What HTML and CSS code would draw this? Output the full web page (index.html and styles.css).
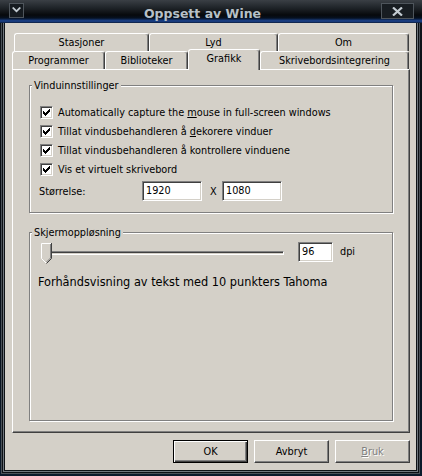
FILE: index.html
```html
<!DOCTYPE html>
<html lang="no">
<head>
  <meta charset="UTF-8" />
  <title>Oppsett av Wine</title>
  <link rel="stylesheet" href="styles.css">
</head>
<body>

<div class="window">
  <div class="titlebar">
    <span class="menu-btn">
      <svg width="9" height="7" viewBox="0 0 9 7"><path d="M0 1 L1.5 0 L4.5 3 L7.5 0 L9 1 L4.5 5.5 Z" fill="#c4ccd2"/></svg>
    </span>
    <span class="title">Oppsett av Wine</span>
    <span class="close-btn">
      <svg width="11" height="9" viewBox="0 0 11 9"><path d="M1 0.5 L10 8.5 M10 0.5 L1 8.5" stroke="#c4ccd2" stroke-width="2.2"/></svg>
    </span>
  </div>

  <div class="client">
    <div class="tabs">
      <div class="tab-row row1">
        <div class="tab t-stasjoner">Stasjoner</div>
        <div class="tab t-lyd">Lyd</div>
        <div class="tab t-om">Om</div>
      </div>
      <div class="tab-row row2">
        <div class="tab t-programmer">Programmer</div>
        <div class="tab t-biblioteker">Biblioteker</div>
        <div class="tab t-grafikk active">Grafikk</div>
        <div class="tab t-skrivebord">Skrivebordsintegrering</div>
      </div>

      <div class="panel">
        <div class="group g-vindu">
          <div class="group-title">Vinduinnstillinger</div>
          <div class="check first"><span class="box"><svg width="9" height="9" viewBox="0 0 9 9"><path d="M1 3H2V4H3V5H4V4H5V3H6V2H7V1H8V4H7V5H6V6H5V7H4V8H3V7H2V6H1Z"/></svg></span><span>Automatically capture the <u>m</u>ouse in full-screen windows</span></div>
          <div class="check"><span class="box"><svg width="9" height="9" viewBox="0 0 9 9"><path d="M1 3H2V4H3V5H4V4H5V3H6V2H7V1H8V4H7V5H6V6H5V7H4V8H3V7H2V6H1Z"/></svg></span><span>Tillat vindusbehandleren å <u>d</u>ekorere vinduer</span></div>
          <div class="check"><span class="box"><svg width="9" height="9" viewBox="0 0 9 9"><path d="M1 3H2V4H3V5H4V4H5V3H6V2H7V1H8V4H7V5H6V6H5V7H4V8H3V7H2V6H1Z"/></svg></span><span>Tillat vindusbehandleren å kontrollere vinduene</span></div>
          <div class="check"><span class="box"><svg width="9" height="9" viewBox="0 0 9 9"><path d="M1 3H2V4H3V5H4V4H5V3H6V2H7V1H8V4H7V5H6V6H5V7H4V8H3V7H2V6H1Z"/></svg></span><span>Vis et virtuelt skrivebord</span></div>
          <div class="size-row">
            <span class="size-label">Størrelse:</span>
            <span class="edit e-size">1920</span>
            <span class="x">X</span>
            <span class="edit e-size">1080</span>
          </div>
        </div>

        <div class="group g-dpi">
          <div class="group-title">Skjermoppløsning</div>
          <div class="dpi-row">
            <div class="slider">
              <div class="track"></div>
              <svg class="thumb" width="11" height="22" viewBox="0 0 11 22">
                <path d="M0.5 0.5H10.5V15.5L5.5 20.5L0.5 15.5Z" fill="#d4d0c8"/>
                <polyline points="0.5,15.5 0.5,0.5 10,0.5" fill="none" stroke="#fff"/>
                <polyline points="0.5,15.5 5,20" fill="none" stroke="#fff"/>
                <polyline points="10.5,0 10.5,15.5 5.5,20.5" fill="none" stroke="#404040"/>
                <polyline points="9.5,1 9.5,15 5.5,19" fill="none" stroke="#808080"/>
              </svg>
            </div>
            <span class="edit e-dpi">96</span>
            <span class="dpi-label">dpi</span>
          </div>
          <div class="preview">Forhåndsvisning av tekst med 10 punkters Tahoma</div>
        </div>
      </div>
    </div>

    <div class="buttons">
      <div class="btn default">OK</div>
      <div class="btn">Avbryt</div>
      <div class="btn disabled"><span><u>B</u>ruk</span></div>
    </div>
  </div>
</div>

</body>
</html>
```

FILE: styles.css
```css
* {
  box-sizing: border-box;
}
body {
  margin: 0;
  background: #000;
  font-family: "DejaVu Sans Condensed", "Liberation Sans", sans-serif;
  font-size: 10.8px;
  color: #000;
}
u {
  text-decoration: underline;
  text-underline-offset: 1px;
}

.window {
  width: 422px;
  height: 476px;
  overflow: hidden;
  background: linear-gradient(#10151b, #060b12 50%, #0b1a2b);
}

/* tittellinje */
.titlebar {
  position: relative;
  z-index: 2;
  height: 23px;
  display: flex;
  align-items: flex-start;
  padding: 3px 8px 0 9px;
  background: linear-gradient(#3a3f45 0, #22272c 7px, #07090c 15px, #06101f 18px, #1c4592 21px, #0d1d3a 23px);
}
.menu-btn {
  width: 15px;
  height: 15px;
  border: 1px solid #4e555c;
  background: #161b20;
  display: flex;
  align-items: center;
  justify-content: center;
}
.title {
  flex: 1;
  text-align: center;
  font: bold 12.5px "DejaVu Sans", sans-serif;
  color: #b6c0c8;
  line-height: 19px;
  margin-top: 1px;
}
.close-btn {
  width: 33px;
  height: 16px;
  border: 1px solid #4e555c;
  background: #181d22;
  display: flex;
  align-items: center;
  justify-content: center;
}

/* klientområde */
.client {
  margin: 0 6px 0 5px;
  width: 411px;
  height: 447px;
  background: #d4d0c8;
  padding: 10px 6px 0 7px;
  box-shadow: 0 0 0 1px #0e1216, 0 0 0 2px #6f767d, 0 0 0 3px #0c1015, 0 0 0 4px #4a5158;
}

/* faner */
.tab-row {
  display: flex;
  height: 18px;
}
.row1 {
  margin-left: 2px;
}
.tab {
  height: 18px;
  border: 1px solid;
  border-bottom: 0;
  border-color: #fff #404040 transparent #fff;
  border-radius: 3px 3px 0 0;
  box-shadow: inset -1px 0 #808080;
  text-align: center;
  line-height: 17px;
  white-space: nowrap;
}
.t-stasjoner { width: 135px; }
.t-lyd { width: 129px; }
.t-om { width: 131px; }
.t-programmer { width: 93px; }
.t-biblioteker { width: 83px; }
.t-grafikk { width: 72px; }
.t-skrivebord { width: 149px; }
.tab.active {
  position: relative;
  z-index: 1;
  height: 21px;
  margin-top: -2px;
  background: #d4d0c8;
  line-height: 17px;
}

.panel {
  height: 364px;
  border: 1px solid;
  border-color: #fff #404040 #404040 #fff;
  box-shadow: inset -1px -1px #808080;
  padding: 15px 16px 0 16px;
}

/* grupper */
.group {
  border: 1px solid #808080;
  box-shadow: 1px 1px 0 #fff, inset 1px 1px 0 #fff;
  padding-left: 10px;
}
.g-vindu {
  height: 128px;
  margin-bottom: 19px;
}
.g-dpi {
  height: 189px;
}
.group-title {
  width: max-content;
  margin: -7px 0 0 -8px;
  padding: 0 2px;
  line-height: 13px;
  background: #d4d0c8;
}

.check {
  display: flex;
  align-items: center;
  height: 19px;
  white-space: nowrap;
}
.check.first {
  margin-top: 11px;
}
.box {
  width: 13px;
  height: 13px;
  margin-right: 5px;
  background: #fff;
  border: 1px solid;
  border-color: #808080 #fff #fff #808080;
  box-shadow: inset 1px 1px #404040, inset -1px -1px #d4d0c8;
  display: flex;
  align-items: center;
  justify-content: center;
}
.box svg {
  display: block;
}

.edit {
  height: 20px;
  background: #fff;
  border: 1px solid;
  border-color: #808080 #fff #fff #808080;
  box-shadow: inset 1px 1px #404040, inset -1px -1px #d4d0c8;
  padding-left: 3px;
  line-height: 18px;
}
.e-size {
  width: 60px;
}
.e-dpi {
  width: 35px;
  margin-left: 14px;
}

.size-row {
  display: flex;
  align-items: center;
  margin-top: 2px;
  margin-left: -1px;
}
.size-label {
  width: 103px;
}
.x {
  width: 20px;
  padding-left: 8px;
}

.dpi-row {
  display: flex;
  align-items: flex-start;
  margin-top: 3px;
  height: 23px;
}
.slider {
  position: relative;
  width: 243px;
  height: 23px;
  margin-left: 1px;
}
.track {
  margin: 9px 0 0 2px;
  width: 241px;
  height: 4px;
  border: 1px solid;
  border-color: #808080 #fff #fff #808080;
  box-shadow: inset 1px 1px #404040;
}
.thumb {
  position: absolute;
  left: 0;
  top: 1px;
}
.dpi-label {
  margin-left: 7px;
  line-height: 20px;
}

.preview {
  margin: 9px 0 0 -2px;
  font-size: 12.6px;
  line-height: 16px;
  white-space: nowrap;
}

/* knapper */
.buttons {
  display: flex;
  justify-content: flex-end;
  gap: 6px;
  margin-top: 7px;
}
.btn {
  width: 75px;
  height: 23px;
  border: 1px solid;
  border-color: #fff #404040 #404040 #fff;
  box-shadow: inset -1px -1px #808080;
  display: flex;
  align-items: center;
  justify-content: center;
}
.btn.default {
  border-color: #000;
  box-shadow: inset 1px 1px #fff, inset -1px -1px #404040, inset -2px -2px #808080;
}
.btn.disabled {
  color: #808080;
  text-shadow: 1px 1px 0 #fff;
}
```
